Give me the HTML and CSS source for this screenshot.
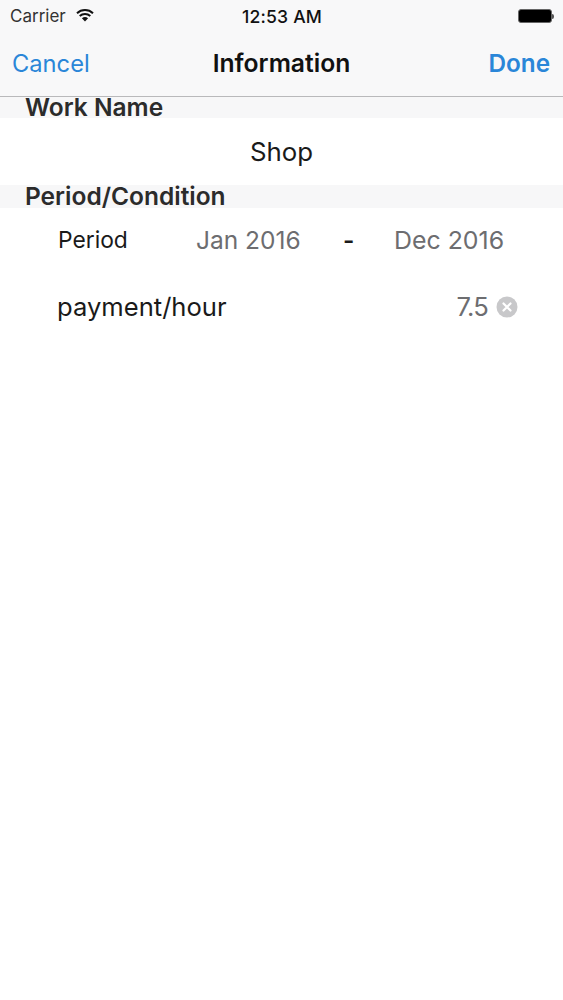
FILE: index.html
```html
<!DOCTYPE html>
<html lang="en">
<head>
<meta charset="utf-8">
<title>Information</title>
<link rel="stylesheet" href="styles.css">
</head>
<body>
<div class="screen">
  <header class="topbar">
    <div class="status">
      <div class="status-left">
        <span class="carrier">Carrier</span>
        <svg class="wifi" viewBox="0 0 20 15" width="20" height="15"><path d="M10 13.6 6.9 10.3a4.6 4.6 0 0 1 6.2 0Z" fill="#111"/><path d="M4.7 8.1a7.8 7.8 0 0 1 10.6 0M2 5.2a11.8 11.8 0 0 1 16 0" fill="none" stroke="#111" stroke-width="2"/></svg>
      </div>
      <span class="clock">12:53 AM</span>
      <div class="battery"><span class="battery-body"></span><span class="battery-tip"></span></div>
    </div>
    <nav class="nav">
      <span class="nav-btn cancel">Cancel</span>
      <span class="nav-title">Information</span>
      <span class="nav-btn done">Done</span>
    </nav>
  </header>
  <div class="section-head first">Work Name</div>
  <div class="name-row">Shop</div>
  <div class="section-head second">Period/Condition</div>
  <div class="period-row">
    <span class="period-label">Period</span>
    <span class="date from">Jan 2016</span>
    <span class="dash">-</span>
    <span class="date to">Dec 2016</span>
  </div>
  <div class="pay-row">
    <span class="pay-label">payment/hour</span>
    <span class="pay-value">7.5</span>
    <svg class="clear" viewBox="0 0 22 22" width="22" height="22"><circle cx="11" cy="11" r="10.5" fill="#c8c8ca"/><path d="M7.5 7.5l7 7M14.5 7.5l-7 7" stroke="#fff" stroke-width="2.2" stroke-linecap="round"/></svg>
  </div>
</div>
</body>
</html>
```
FILE: styles.css
```css
* { box-sizing: border-box; }
html, body { margin: 0; padding: 0; background: #fff; }
body { font-family: Inter, "Liberation Sans", sans-serif; color: #111; }
.screen { width: 563px; height: 1000px; overflow: hidden; background: #fff; }
.topbar { height: 97px; background: #f8f8f9; border-bottom: 1px solid #b9b9bb; display: flex; flex-direction: column; }
.status { height: 32px; padding: 0 9px 0 10px; display: grid; grid-template-columns: 1fr auto 1fr; align-items: center; }
.status-left { display: flex; align-items: center; gap: 9px; }
.carrier { font-size: 17px; color: #333; }
.wifi { margin-top: -2px; }
.clock { font-size: 17.6px; font-weight: 500; color: #111; letter-spacing: 0.2px; }
.battery { justify-self: end; display: flex; align-items: center; }
.battery-body { width: 34px; height: 14px; background: #000; border: 1px solid #666; border-radius: 3px; }
.battery-tip { width: 2px; height: 5px; background: #555; border-radius: 0 2px 2px 0; }
.nav { height: 64px; padding: 0 13px 2px; display: grid; grid-template-columns: 1fr auto 1fr; align-items: center; }
.nav-btn { font-size: 23.7px; color: #2a86d8; }
.cancel { margin-left: -1px; }
.done { justify-self: end; font-weight: 600; font-size: 24.3px; }
.nav-title { font-size: 24.7px; font-weight: 600; color: #111; }
.section-head { background: #f7f7f8; padding-left: 25px; font-size: 24.5px; font-weight: 600; color: #2b2b2b; line-height: 21px; }
.first { height: 21px; }
.second { height: 23px; line-height: 22px; }
.name-row { height: 67px; display: flex; align-items: center; justify-content: center; font-size: 25.8px; color: #1a1a1a; }
.period-row { height: 66px; display: flex; align-items: center; font-size: 24.5px; padding-bottom: 3px; }
.period-label { width: 138px; padding-left: 58px; flex: none; color: #1a1a1a; font-size: 22.8px; }
.date { color: #6d6d70; flex: none; }
.from { padding-left: 58px; width: 205px; }
.dash { width: 51px; flex: none; color: #1a1a1a; font-weight: 600; }
.to { width: 115px; font-size: 24.9px; }
.pay-row { height: 66px; display: flex; align-items: center; padding: 0 45px 2px 57px; font-size: 25.6px; }
.pay-label { flex: 1; color: #1a1a1a; }
.pay-value { color: #6d6d70; margin-right: 8px; letter-spacing: -0.8px; }
.clear { margin-top: 2px; }
```
